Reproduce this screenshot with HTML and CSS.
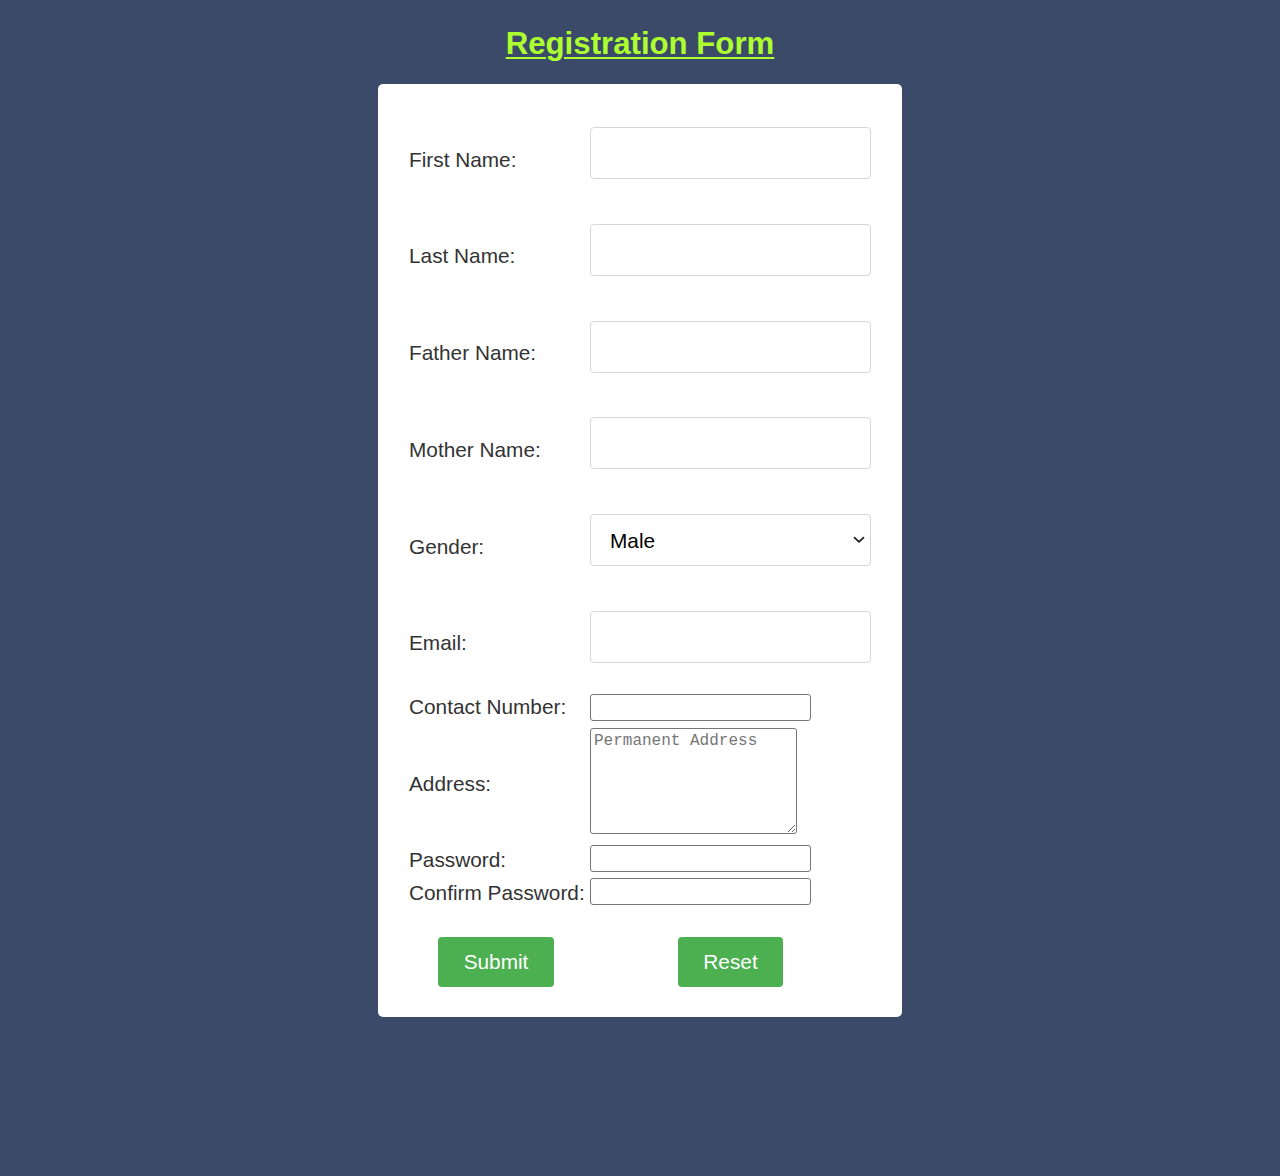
FILE: index.html
```html
<!DOCTYPE html>
<html lang="en">
<head>
<meta charset="utf-8">
<title>Registration Form</title>
<link rel="stylesheet" href="styles.css">
</head>
<body>
<h1 class="title">Registration Form</h1>
<div class="card">
  <form class="form">
    <div class="row row-big">
      <label class="lbl lbl-big">First Name:</label>
      <input class="field" type="text">
    </div>
    <div class="row row-big">
      <label class="lbl lbl-big">Last Name:</label>
      <input class="field" type="text">
    </div>
    <div class="row row-big">
      <label class="lbl lbl-big">Father Name:</label>
      <input class="field" type="text">
    </div>
    <div class="row row-big">
      <label class="lbl lbl-big">Mother Name:</label>
      <input class="field" type="text">
    </div>
    <div class="row row-big">
      <label class="lbl lbl-big">Gender:</label>
      <div class="select-wrap">
        <select class="field select">
          <option>Male</option>
          <option>Female</option>
          <option>Other</option>
        </select>
        <svg class="chev" width="12" height="8" viewBox="0 0 12 8" aria-hidden="true"><path d="M1.5 1.6 L6 5.8 L10.5 1.6" fill="none" stroke="#222" stroke-width="1.8" stroke-linecap="round" stroke-linejoin="round"/></svg>
      </div>
    </div>
    <div class="row row-big row-last">
      <label class="lbl lbl-big">Email:</label>
      <input class="field" type="email">
    </div>
    <div class="row row-contact">
      <label class="lbl">Contact Number:</label>
      <input class="small" type="text">
    </div>
    <div class="row row-address">
      <label class="lbl lbl-address">Address:</label>
      <textarea class="area" placeholder="Permanent Address"></textarea>
    </div>
    <div class="row row-pass">
      <label class="lbl lbl-pass">Password:</label>
      <input class="small" type="password">
    </div>
    <div class="row row-confirm">
      <label class="lbl lbl-pass">Confirm Password:</label>
      <input class="small" type="password">
    </div>
    <div class="row row-buttons">
      <button class="btn" type="submit">Submit</button>
      <button class="btn" type="reset">Reset</button>
    </div>
  </form>
</div>
</body>
</html>
```

FILE: styles.css
```css
html, body {
  margin: 0;
  padding: 0;
}

body {
  background: #3b4a69;
  font-family: "Liberation Sans", Arial, sans-serif;
  min-height: 1176px;
}

.title {
  margin: 0;
  padding-top: 26px;
  font-size: 31.2px;
  line-height: 36px;
  font-weight: bold;
  color: #adff2f;
  text-decoration: underline;
  text-decoration-thickness: 2px;
  text-underline-offset: 3px;
  text-align: center;
}

.card {
  box-sizing: border-box;
  width: 524px;
  margin: 22px auto 0;
  padding: 43px 31px 30px;
  background: #ffffff;
  border-radius: 5px;
}

.form {
  margin: 0;
}

.row {
  display: grid;
  grid-template-columns: 174px 281px;
  column-gap: 7px;
  align-items: center;
}

.row-big {
  height: 52px;
  margin-bottom: 44.8px;
}

.row-big.row-last {
  margin-bottom: 31px;
}

.lbl {
  font-size: 20.8px;
  line-height: 24px;
  color: #333333;
  white-space: nowrap;
}

.lbl-big {
  padding-top: 13px;
}

.field {
  box-sizing: border-box;
  width: 281px;
  height: 52px;
  margin: 0;
  padding: 0 19px;
  border: 1px solid #d6d6d6;
  border-radius: 4px;
  background: #ffffff;
  font-family: "Liberation Sans", Arial, sans-serif;
  font-size: 20.8px;
  color: #000000;
  outline: none;
}

.select-wrap {
  position: relative;
  width: 281px;
  height: 52px;
}

.select {
  appearance: none;
  -webkit-appearance: none;
  display: block;
}

.chev {
  position: absolute;
  right: 6px;
  top: 22px;
  pointer-events: none;
}

.small {
  box-sizing: border-box;
  width: 221px;
  height: 27px;
  margin: 0;
  padding: 1px 3px;
  border: 1px solid #767676;
  border-radius: 3px;
  background: #ffffff;
  font-size: 16px;
  outline: none;
}

.row-contact {
  height: 27px;
  margin-bottom: 7px;
}

.row-address {
  height: 106px;
  margin-bottom: 11px;
}

.lbl-address {
  padding-top: 6px;
}

.area {
  box-sizing: border-box;
  width: 207px;
  height: 106px;
  margin: 0;
  padding: 3px 3px;
  border: 1px solid #767676;
  border-radius: 3px;
  font-family: "Liberation Mono", "DejaVu Sans Mono", monospace;
  font-size: 16px;
  line-height: 19px;
  color: #000000;
  outline: none;
}

.area::placeholder {
  color: #767676;
}

.row-pass {
  height: 27px;
  margin-bottom: 6px;
}

.row-confirm {
  height: 27px;
  margin-bottom: 32px;
}

.lbl-pass {
  padding-top: 3px;
}

.row-buttons {
  height: 50px;
}

.btn {
  justify-self: center;
  height: 50px;
  margin: 0;
  padding: 0 25.5px;
  border: none;
  border-radius: 4px;
  background: #4caf50;
  color: #ffffff;
  font-family: "Liberation Sans", Arial, sans-serif;
  font-size: 20.8px;
  cursor: pointer;
}
```
